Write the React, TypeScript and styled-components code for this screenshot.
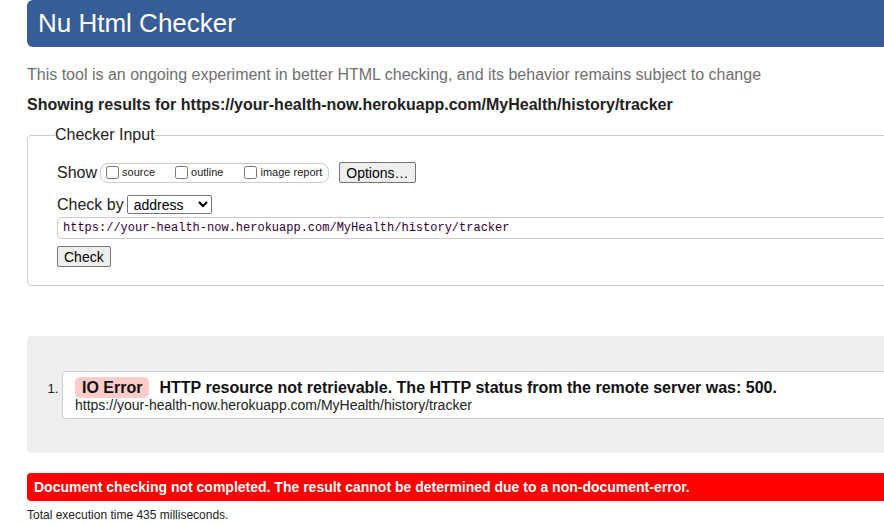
import React from "react";
import styled, { createGlobalStyle } from "styled-components";

const GlobalStyle = createGlobalStyle`
  html, body {
    margin: 0;
    padding: 0;
    overflow: hidden;
    background: #fff;
  }
  body {
    font-family: "Liberation Sans", Arial, sans-serif;
    color: #222;
  }
`;

const Page = styled.div`
  width: 1150px;
  padding-left: 27px;
`;

const Header = styled.h1`
  margin: 0;
  height: 47px;
  display: flex;
  align-items: center;
  padding-left: 11px;
  background: #365d95;
  color: #fff;
  border-radius: 6px;
  font-size: 26px;
  font-weight: normal;
`;

const Intro = styled.p`
  margin: 18px 0 0;
  font-size: 16px;
  line-height: 20px;
  color: #707070;
`;

const Results = styled.p`
  margin: 10px 0 0;
  font-size: 16px;
  line-height: 20px;
  font-weight: bold;
  color: #222;
`;

const Fieldset = styled.fieldset`
  margin: 10px 0 0;
  padding: 6px 0 18px 27px;
  border: 1px solid #ccc;
  border-radius: 4px;
  min-width: 0;
`;

const Legend = styled.legend`
  padding: 0;
  font-size: 16px;
  line-height: 20px;
  color: #222;
`;

const Row = styled.div<{ $mt?: number }>`
  display: flex;
  align-items: center;
  margin-left: 2px;
  margin-top: ${(p) => p.$mt ?? 0}px;
  font-size: 16px;
  color: #222;
`;

const RowLabel = styled.span`
  font-size: 16px;
  margin-right: 3px;
`;

const Pill = styled.span`
  display: inline-flex;
  align-items: center;
  height: 18px;
  padding: 0 6px 0 5px;
  border: 1px solid #ccc;
  border-radius: 8px;
  font-size: 11px;
`;

const CheckLabel = styled.label<{ $gap?: number }>`
  display: inline-flex;
  align-items: flex-end;
  margin-right: ${(p) => p.$gap ?? 0}px;
  font-size: 11px;
  line-height: 13px;
  color: #222;
  input {
    margin: 0 3px 0 0;
    width: 13px;
    height: 13px;
  }
`;

const NativeButton = styled.button<{ $ml?: number }>`
  margin-left: ${(p) => p.$ml ?? 0}px;
  height: 21px;
  padding: 0 6px;
  font-family: "Liberation Sans", Arial, sans-serif;
  font-size: 14px;
  color: #000;
  background: #efefef;
  border: 1px solid #767676;
  border-radius: 2px;
`;

const Select = styled.select`
  width: 85px;
  height: 19px;
  font-family: "Liberation Sans", Arial, sans-serif;
  font-size: 14px;
  color: #000;
  border: 1px solid #767676;
  border-radius: 2px;
  background: #fff;
  padding: 0 0 0 2px;
`;

const UrlInput = styled.input`
  display: block;
  margin: 3px 0 0 2px;
  width: 1000px;
  height: 22px;
  box-sizing: border-box;
  padding: 0 5px;
  border: 1px solid #ccc;
  border-radius: 4px;
  font-family: "Liberation Mono", "Courier New", monospace;
  font-size: 12px;
  color: #303;
`;

const ResultsArea = styled.div`
  margin-top: 50px;
  background: #eee;
  border-radius: 4px;
  padding: 35px 0 34px;
`;

const List = styled.ol`
  margin: 0;
  padding: 0 0 0 35px;
  font-size: 13px;
  color: #222;
`;

const Item = styled.li`
  background: #fff;
  border: 1px solid #ccc;
  border-radius: 4px;
  padding: 5px 12px 5px 12px;
`;

const MessageLine = styled.p`
  margin: 0;
  display: flex;
  align-items: center;
  font-size: 16px;
  font-weight: bold;
  color: #111;
`;

const Badge = styled.span`
  display: inline-block;
  height: 21px;
  line-height: 21px;
  padding: 0 7px;
  margin-right: 10px;
  background: #fcc;
  border-radius: 5px;
  font-weight: bold;
  font-size: 16px;
`;

const Location = styled.p`
  margin: 0;
  font-size: 14px;
  line-height: 15px;
  color: #222;
`;

const Failure = styled.div`
  margin-top: 20px;
  height: 28px;
  display: flex;
  align-items: center;
  padding-left: 7px;
  background: #f00;
  color: #fff;
  font-size: 14px;
  font-weight: bold;
  border-radius: 4px;
`;

const Footer = styled.p`
  margin: 4px 0 0;
  font-size: 12px;
  line-height: 20px;
  color: #222;
`;

export default function App() {
  const url = "https://your-health-now.herokuapp.com/MyHealth/history/tracker";
  return (
    <>
      <GlobalStyle />
      <Page>
        <Header>Nu Html Checker</Header>
        <Intro>
          This tool is an ongoing experiment in better HTML checking, and its behavior remains subject to change
        </Intro>
        <Results>Showing results for {url}</Results>
        <Fieldset>
          <Legend>Checker Input</Legend>
          <Row $mt={11}>
            <RowLabel>Show</RowLabel>
            <Pill>
              <CheckLabel $gap={20}>
                <input type="checkbox" />
                source
              </CheckLabel>
              <CheckLabel $gap={21}>
                <input type="checkbox" />
                outline
              </CheckLabel>
              <CheckLabel>
                <input type="checkbox" />
                image report
              </CheckLabel>
            </Pill>
            <NativeButton $ml={10} type="button">Options…</NativeButton>
          </Row>
          <Row $mt={12}>
            <RowLabel>Check by</RowLabel>
            <Select defaultValue="address">
              <option value="address">address</option>
              <option value="file">file upload</option>
              <option value="text">text input</option>
            </Select>
          </Row>
          <UrlInput type="url" defaultValue={url} />
          <Row $mt={7}>
            <NativeButton type="button">Check</NativeButton>
          </Row>
        </Fieldset>
        <ResultsArea>
          <List>
            <Item>
              <MessageLine>
                <Badge>IO Error</Badge>
                HTTP resource not retrievable. The HTTP status from the remote server was: 500.
              </MessageLine>
              <Location>{url}</Location>
            </Item>
          </List>
        </ResultsArea>
        <Failure>
          Document checking not completed. The result cannot be determined due to a non-document-error.
        </Failure>
        <Footer>Total execution time 435 milliseconds.</Footer>
      </Page>
    </>
  );
}
